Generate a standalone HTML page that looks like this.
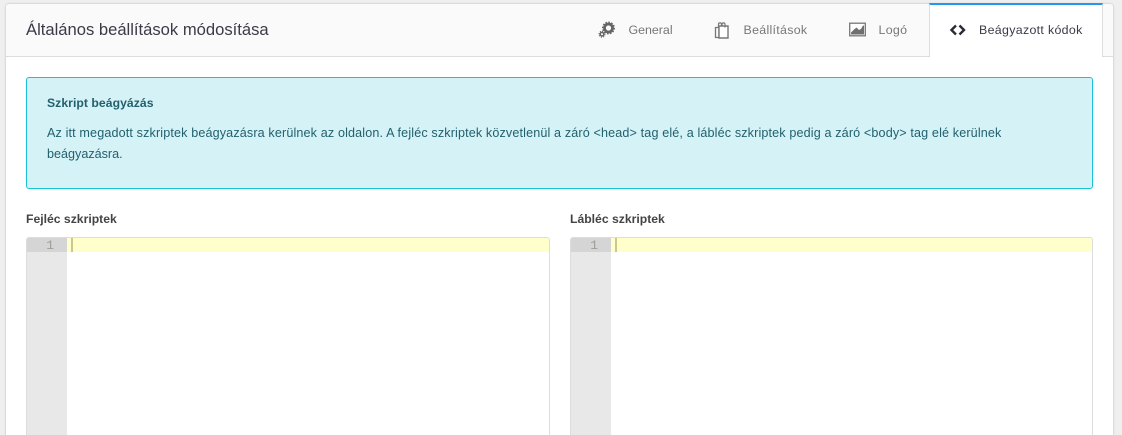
<!DOCTYPE html>
<html lang="hu">
<head>
<meta charset="utf-8">
<title>Általános beállítások módosítása</title>
<style>
html,body{margin:0;padding:0;width:1122px;height:435px;overflow:hidden;background:#efefef;font-family:"Liberation Sans",sans-serif;}
#wrap{position:relative;width:1122px;height:435px;overflow:hidden;background:#efefef;}
.a{position:absolute;white-space:nowrap;}
#card{position:absolute;left:6px;top:4px;width:1107px;height:431px;background:#fff;border-radius:3px 3px 0 0;box-shadow:0 0 2px rgba(0,0,0,.25);}
#head{position:absolute;left:6px;top:4px;width:1107px;height:52px;background:#fafafa;border-bottom:1px solid #ddd;border-radius:3px 3px 0 0;}
#active{position:absolute;left:929px;top:3px;width:174px;height:54px;background:#fff;border-left:1px solid #ddd;border-right:1px solid #ddd;border-top:2px solid #2196f3;box-sizing:border-box;}
.tab{font-size:12.4px;color:#777;top:22px;line-height:16px;}
#alert{position:absolute;left:26px;top:77px;width:1067px;height:112px;box-sizing:border-box;background:#d5f2f7;border:1px solid #17c1d8;border-radius:3px;}
.al{color:#22606e;font-size:12.6px;line-height:16px;}
.lbl{font-size:12.2px;font-weight:bold;color:#444;top:211px;line-height:16px;}
.ed{position:absolute;top:237px;width:524px;height:198px;box-sizing:border-box;background:#fff;border:1px solid #ddd;border-bottom:0;border-radius:3px 3px 0 0;overflow:hidden;}
.gut{position:absolute;left:0;top:0;width:40px;height:100%;background:#e8e8e8;}
.gutl{position:absolute;left:0;top:0;width:40px;height:14px;background:#d5d5d5;color:#a09c98;font:13px/15px "Liberation Mono",monospace;text-align:right;box-sizing:border-box;padding-right:13px;}
.line{position:absolute;left:40px;top:0;right:0;height:14px;background:#ffffcc;}
.cur{position:absolute;left:4px;top:0;width:2px;height:14px;background:#c8c892;}
</style>
</head>
<body>
<div id="wrap">
<div id="card"></div>
<div id="head"></div>
<div id="active"></div>

<div class="a" style="left:26px;top:20px;font-size:16.6px;line-height:20px;color:#3b3b48;">Általános beállítások módosítása</div>

<svg class="a" style="left:598px;top:21px" width="18" height="18" viewBox="0 0 18 18">
  <circle cx="10.5" cy="7" r="4" fill="none" stroke="#666" stroke-width="2.8"/>
  <circle cx="10.5" cy="7" r="5.8" fill="none" stroke="#666" stroke-width="1.4" stroke-dasharray="1.6 1.4"/>
  <circle cx="4" cy="13.2" r="1.8" fill="none" stroke="#666" stroke-width="1.5"/>
  <circle cx="4" cy="13.2" r="3" fill="none" stroke="#666" stroke-width="1" stroke-dasharray="1.2 1.1"/>
</svg>
<div class="a tab" style="left:628.5px;">General</div>

<svg class="a" style="left:714px;top:21px" width="16" height="18" viewBox="0 0 16 18">
  <path d="M1.5 6.5H5V16.5H1.5Z" fill="none" stroke="#777" stroke-width="1.3"/>
  <path d="M5 5H14V17H5Z" fill="#fff" stroke="#777" stroke-width="1.4"/>
  <path d="M4.5 6V3.2C4.5 1.4 7.5 1.4 7.5 3.2V5M8 5V3.2C8 1.4 11 1.4 11 3.2V6.5" fill="none" stroke="#777" stroke-width="1.2"/>
</svg>
<div class="a tab" style="left:743.5px;letter-spacing:.3px;">Beállítások</div>

<svg class="a" style="left:849px;top:22px" width="17" height="15" viewBox="0 0 17 15">
  <rect x=".7" y="1.2" width="15.6" height="12.6" fill="#fff" stroke="#777" stroke-width="1.3"/>
  <path d="M2 12.5V10.5L5 7.5L7.5 5.5L10 8L12 7L14 3.5L15 3.5V12.5Z" fill="#6f6f6f"/>
</svg>
<div class="a tab" style="left:878.5px;letter-spacing:.3px;">Logó</div>

<svg class="a" style="left:950px;top:24px" width="16" height="12" viewBox="0 0 16 12">
  <path d="M6 1.5L1.5 6L6 10.5M9.5 1.5L14 6L9.5 10.5" fill="none" stroke="#2b2b35" stroke-width="2.4"/>
</svg>
<div class="a tab" style="left:979px;color:#3b3b48;letter-spacing:.32px;">Beágyazott kódok</div>

<div id="alert"></div>
<div class="a al" style="left:47px;top:95px;font-weight:bold;font-size:12.2px;letter-spacing:.05px;">Szkript beágyázás</div>
<div class="a al" style="left:47px;top:125px;letter-spacing:.135px;">Az itt megadott szkriptek beágyazásra kerülnek az oldalon. A fejléc szkriptek közvetlenül a záró &lt;head&gt; tag elé, a lábléc szkriptek pedig a záró &lt;body&gt; tag elé kerülnek</div>
<div class="a al" style="left:47px;top:146px;">beágyazásra.</div>

<div class="a lbl" style="left:26px;">Fejléc szkriptek</div>
<div class="a lbl" style="left:570px;">Lábléc szkriptek</div>

<div class="ed" style="left:26px;">
  <div class="gut"></div><div class="gutl">1</div>
  <div class="line"><div class="cur"></div></div>
</div>
<div class="ed" style="left:570px;width:523px;">
  <div class="gut"></div><div class="gutl">1</div>
  <div class="line"><div class="cur"></div></div>
</div>
</div>
</body>
</html>
